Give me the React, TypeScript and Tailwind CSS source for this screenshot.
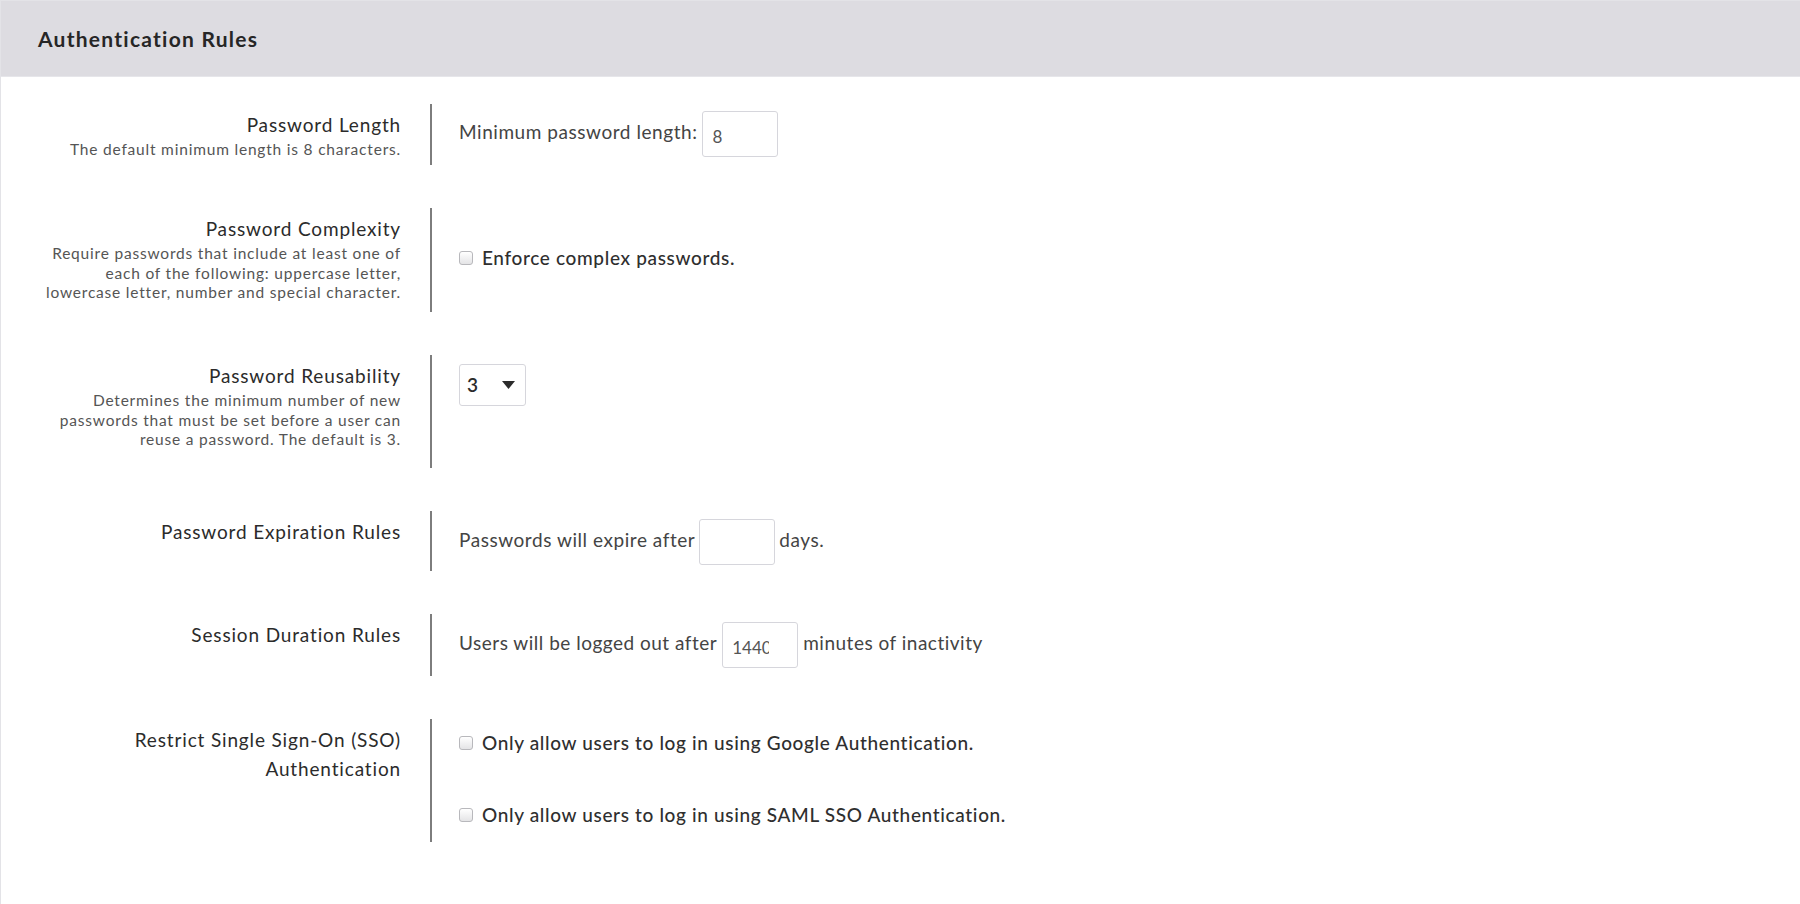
import React from "react";

type RowProps = {
  title: React.ReactNode;
  desc?: React.ReactNode;
  h: string;
  right: React.ReactNode;
};

const Row: React.FC<RowProps> = ({ title, desc, h, right }) => (
  <div className={`flex ${h}`}>
    <div className="w-[400px] shrink-0 pt-[6px] text-right">
      <div className="text-[19px] leading-[29px] tracking-[0.85px] text-[#2b2b2b]">{title}</div>
      {desc && (
        <div className="mt-[1px] text-[15.5px] leading-[19.5px] tracking-[0.8px] text-[#555]">
          {desc}
        </div>
      )}
    </div>
    <div className="ml-[29px] w-[2px] shrink-0 bg-[#7d7d7d]"></div>
    <div className="flex-1 pl-[27px]">{right}</div>
  </div>
);

const Box: React.FC<{ value?: string }> = ({ value = "" }) => (
  <input
    readOnly
    value={value}
    className="h-[46px] w-[76px] rounded-[3px] border border-[#d6d6dc] bg-white pl-[9px] pr-[28px] pt-[4px] text-[17px] tracking-normal text-[#555] outline-none"
  />
);

const Check: React.FC<{ label: string }> = ({ label }) => (
  <label className="flex items-center gap-[9px] text-[19px] font-medium leading-[24px] tracking-[0.65px] text-[#2f2f2f]">
    <input
      type="checkbox"
      className="h-[14px] w-[14px] appearance-none rounded-[3px] border border-[#b8b8bc] bg-linear-to-b from-white to-[#e4e4e6]"
    />
    {label}
  </label>
);

const App: React.FC = () => {
  return (
    <div className="min-h-screen bg-white font-['Lato',sans-serif]">
      <div className="min-h-[904px] border-l border-t border-[#e3e3e7]">
        <div className="flex h-[76px] items-center border-b border-[#e6e6ea] bg-[#dddce1] px-[37px]">
          <h2 className="text-[21px] font-bold tracking-[1.25px] text-[#262626]">
            Authentication Rules
          </h2>
        </div>

        <div className="flex flex-col gap-[43px] pt-[27px]">
          <Row
            h="h-[61px]"
            title="Password Length"
            desc="The default minimum length is 8 characters."
            right={
              <div className="flex items-center gap-[5px] pt-[7px] text-[19px] tracking-[0.55px] text-[#444]">
                <span className="-mt-[3px]">Minimum password length:</span>
                <Box value="8" />
              </div>
            }
          />

          <Row
            h="h-[104px]"
            title="Password Complexity"
            desc={
              <>
                Require passwords that include at least one of
                <br />
                each of the following: uppercase letter,
                <br />
                lowercase letter, number and special character.
              </>
            }
            right={
              <div className="flex h-full items-center pb-[4px]">
                <Check label="Enforce complex passwords." />
              </div>
            }
          />

          <Row
            h="h-[113px]"
            title="Password Reusability"
            desc={
              <>
                Determines the minimum number of new
                <br />
                passwords that must be set before a user can
                <br />
                reuse a password. The default is 3.
              </>
            }
            right={
              <div className="pt-[9px]">
                <div className="flex h-[42px] w-[67px] items-center justify-between rounded-[3px] border border-[#d6d6dc] bg-white pl-[7px] pr-[10px]">
                  <span className="text-[19px] font-semibold text-[#2b2b2b]">3</span>
                  <svg width="13" height="8" viewBox="0 0 13 8">
                    <path d="M0 0h13L6.5 8z" fill="#2b2b2b" />
                  </svg>
                </div>
              </div>
            }
          />

          <Row
            h="h-[60px]"
            title="Password Expiration Rules"
            right={
              <div className="flex items-center gap-[4px] pt-[8px] text-[19px] tracking-[0.55px] text-[#444]">
                <span className="-mt-[3px]">Passwords will expire after</span>
                <Box />
                <span className="-mt-[3px]">days.</span>
              </div>
            }
          />

          <Row
            h="h-[62px]"
            title="Session Duration Rules"
            right={
              <div className="flex items-center gap-[5px] pt-[8px] text-[19px] tracking-[0.5px] text-[#444]">
                <span className="-mt-[3px]">Users will be logged out after</span>
                <Box value="1440" />
                <span className="-mt-[3px]">minutes of inactivity</span>
              </div>
            }
          />

          <Row
            h="h-[123px]"
            title={
              <>
                Restrict Single Sign-On (SSO)
                <br />
                Authentication
              </>
            }
            right={
              <div className="flex flex-col gap-[48px] pt-[12px]">
                <Check label="Only allow users to log in using Google Authentication." />
                <Check label="Only allow users to log in using SAML SSO Authentication." />
              </div>
            }
          />
        </div>
      </div>
    </div>
  );
};

export default App;
